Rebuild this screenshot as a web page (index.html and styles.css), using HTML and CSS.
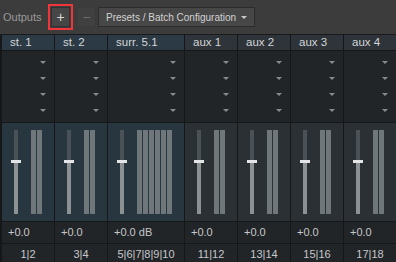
FILE: index.html
```html
<!DOCTYPE html>
<html lang="en">
<head>
  <meta charset="UTF-8" />
  <title>Outputs</title>
  <link rel="stylesheet" href="styles.css">
</head>
<body>
  <div class="toolbar">
    <span class="label">Outputs</span>
    <span class="highlight"><button class="tool-btn">+</button></span>
    <button class="tool-btn dim">&minus;</button>
    <button class="dropdown">Presets / Batch Configuration <span class="caret"></span></button>
  </div>

  <div class="mixer" id="mixer"></div>

  <script>
    const channels = [
      { name: "st. 1", meters: 2, value: "+0.0", out: "1|2", kind: "st" },
      { name: "st. 2", meters: 2, value: "+0.0", out: "3|4", kind: "st" },
      { name: "surr. 5.1", meters: 6, value: "+0.0 dB", out: "5|6|7|8|9|10", kind: "st wide" },
      { name: "aux 1", meters: 2, value: "+0.0", out: "11|12", kind: "aux" },
      { name: "aux 2", meters: 2, value: "+0.0", out: "13|14", kind: "aux" },
      { name: "aux 3", meters: 2, value: "+0.0", out: "15|16", kind: "aux" },
      { name: "aux 4", meters: 2, value: "+0.0", out: "17|18", kind: "aux" }
    ];

    const mixer = document.getElementById("mixer");
    channels.forEach(ch => {
      const col = document.createElement("div");
      col.className = "channel " + ch.kind;
      col.innerHTML = `
        <div class="ch-name">${ch.name}</div>
        <div class="sends">
          <div class="send"><span class="arrow"></span></div>
          <div class="send"><span class="arrow"></span></div>
          <div class="send"><span class="arrow"></span></div>
          <div class="send"><span class="arrow"></span></div>
        </div>
        <div class="strip">
          <div class="fader"><div class="knob"></div></div>
          <div class="meters">${'<div class="meter"></div>'.repeat(ch.meters)}</div>
        </div>
        <div class="ch-value">${ch.value}</div>
        <div class="ch-out">${ch.out}</div>
      `;
      mixer.appendChild(col);
    });
  </script>
</body>
</html>
```

FILE: styles.css
```css
body {
  margin: 0;
  width: 396px;
  height: 262px;
  overflow: hidden;
  background-color: #151719;
  font-family: "Liberation Sans", Arial, sans-serif;
  font-size: 11px;
}

button {
  font-family: inherit;
  font-size: 11px;
  cursor: pointer;
}

.toolbar {
  display: flex;
  align-items: center;
  height: 34px;
  background-color: #3c3c3c;
  padding-left: 3px;
}

.label {
  color: #999;
  width: 45px;
}

.highlight {
  display: flex;
  padding: 1px;
  border: 2px solid #f0353b;
}

.tool-btn {
  width: 19px;
  height: 20px;
  padding: 0;
  border: 1px solid #333;
  background-color: #464646;
  color: #d8d8d8;
  font-size: 14px;
  line-height: 16px;
}

.tool-btn.dim {
  margin-left: 4px;
  border-color: #3a3a3a;
  background-color: #404040;
  color: #6a6a6a;
}

.dropdown {
  display: flex;
  align-items: center;
  gap: 5px;
  margin-left: 2px;
  height: 20px;
  padding: 0 7px;
  border: 1px solid #2c2c2c;
  background-color: #474747;
  color: #d2d2d2;
  font-size: 10px;
}

.caret {
  width: 0;
  height: 0;
  border-left: 3px solid transparent;
  border-right: 3px solid transparent;
  border-top: 3px solid #c8c8c8;
}

/* mixer strips */
.mixer {
  display: grid;
  grid-template-columns: 52px 52px 76px 52px 52px 52px 52px;
  gap: 1px;
  padding-left: 2px;
  border-top: 1px solid #1a1a1a;
}

.channel {
  display: flex;
  flex-direction: column;
  gap: 1px;
}

.ch-name {
  height: 15px;
  line-height: 15px;
  padding-left: 8px;
  color: #d4d6d8;
  font-size: 11.5px;
}

.st .ch-name { background-color: #2b3a44; }
.aux .ch-name { background-color: #2e3439; }

.sends {
  height: 71px;
  padding-top: 3px;
  box-sizing: border-box;
  background-color: #222528;
}

.send {
  display: flex;
  justify-content: flex-end;
  align-items: center;
  height: 16px;
  padding-right: 8px;
}

.arrow {
  width: 0;
  height: 0;
  border-left: 3px solid transparent;
  border-right: 3px solid transparent;
  border-top: 3px solid #858a8e;
}

.strip {
  display: flex;
  height: 98px;
  padding: 7px 0 0 9px;
  box-sizing: border-box;
}

.st .strip { background-color: #283640; }
.aux .strip { background-color: #2b3035; }

.fader {
  position: relative;
  width: 4px;
  height: 84px;
  margin-left: 3px;
  background: linear-gradient(#4b5257 0 30px, #8c9194 30px);
}

.knob {
  position: absolute;
  top: 30px;
  left: -3px;
  width: 10px;
  height: 3px;
  background-color: #e2e4e5;
}

.meters {
  display: flex;
  gap: 1px;
  margin-left: 13px;
}

.meter {
  width: 5px;
  height: 84px;
  background-color: #6f777b;
}

.ch-value {
  height: 21px;
  line-height: 21px;
  padding-left: 6px;
  background-color: #222528;
  color: #c6c8ca;
}

.ch-out {
  height: 20px;
  line-height: 20px;
  text-align: center;
  background-color: #222528;
  color: #c6c8ca;
}
```
